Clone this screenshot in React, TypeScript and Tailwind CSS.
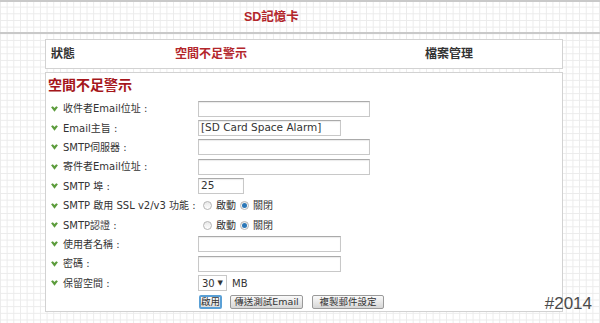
type Row = {
  label: string;
  kind: "input" | "radio" | "select";
  width?: string;
  value?: string;
};

const rows: Row[] = [
  { label: "收件者Email位址 :", kind: "input", width: "w-[172px]" },
  { label: "Email主旨 :", kind: "input", width: "w-[143px]", value: "[SD Card Space Alarm]" },
  { label: "SMTP伺服器 :", kind: "input", width: "w-[172px]" },
  { label: "寄件者Email位址 :", kind: "input", width: "w-[172px]" },
  { label: "SMTP 埠 :", kind: "input", width: "w-[46px]", value: "25" },
  { label: "SMTP 啟用 SSL v2/v3 功能 :", kind: "radio" },
  { label: "SMTP認證 :", kind: "radio" },
  { label: "使用者名稱 :", kind: "input", width: "w-[143px]" },
  { label: "密碼 :", kind: "input", width: "w-[143px]" },
  { label: "保留空間 :", kind: "select" },
];

function Bullet() {
  return (
    <svg width="7" height="6" viewBox="0 0 8 7" className="shrink-0">
      <path d="M0 1.6 L2 0.4 L4 2.4 L6 0.4 L8 1.6 L4 6.6 Z" fill="#5c9c3c" />
    </svg>
  );
}

function Radio({ on }: { on?: boolean }) {
  return (
    <span className="flex h-[9px] w-[9px] items-center justify-center rounded-full border border-[#b5b5b5] bg-[linear-gradient(#e8e8e8,#ffffff)]">
      {on && <span className="h-[5px] w-[5px] rounded-full bg-[#2c78b8]" />}
    </span>
  );
}

function Button({ children, className }: { children: string; className: string }) {
  return (
    <button
      className={`${className} flex h-[14px] items-center justify-center rounded-[2px] text-[9.5px] leading-none text-[#333]`}
    >
      {children}
    </button>
  );
}

export default function App() {
  return (
    <div className="relative h-[323px] w-[600px] overflow-hidden bg-white bg-[linear-gradient(to_right,#ebebeb_1px,transparent_1px),linear-gradient(to_bottom,#ebebeb_1px,transparent_1px)] bg-[length:6.67px_6.67px] font-['DejaVu_Sans','Noto_Sans_CJK_TC',sans-serif] text-[#333]">
      <div className="flex h-[34px] items-center border-t-2 border-b-2 border-[#c9c9c9] pl-[244px]">
        <span className="font-['Liberation_Sans','Noto_Sans_CJK_TC',sans-serif] text-[12.5px] font-bold text-[#b3262b]">SD記憶卡</span>
      </div>

      <div className="ml-[45px] mt-[5px] w-[518px]">
        <div className="flex h-[30px] items-center border border-[#d2d2d2] bg-white text-[12px] font-bold">
          <span className="ml-[5px] w-[124px]">狀態</span>
          <span className="w-[250px] text-[#b3262b]">空間不足警示</span>
          <span>檔案管理</span>
        </div>

        <div className="mt-[3px] h-[240px] border border-[#d2d2d2] bg-white">
          <div className="h-[26px] pl-[2px] text-[14px] font-bold leading-[24px] text-[#a5161b]">空間不足警示</div>
          {rows.map((r) => (
            <div key={r.label} className="flex h-[19.4px] items-center">
              <div className="flex w-[152px] shrink-0 items-center gap-[5px] pl-[5px] text-[10px]">
                <Bullet />
                <span className="whitespace-nowrap">{r.label}</span>
              </div>
              {r.kind === "input" && (
                <div
                  className={`${r.width} flex h-[16px] items-center border border-[#c8c8c8] border-t-[#aaaaaa] bg-white pl-[2px] text-[10.5px] shadow-[inset_0_1px_1px_rgba(0,0,0,0.08)]`}
                >
                  {r.value}
                </div>
              )}
              {r.kind === "radio" && (
                <div className="flex items-center pl-[5px] text-[10px]">
                  <Radio />
                  <span className="ml-[4px] mr-[4px]">啟動</span>
                  <Radio on />
                  <span className="ml-[4px]">關閉</span>
                </div>
              )}
              {r.kind === "select" && (
                <div className="flex items-center text-[10px]">
                  <div className="flex h-[16px] w-[29px] items-center justify-between border border-[#c8c8c8] bg-white px-[3px]">
                    <span>30</span>
                    <span className="text-[7px]">▼</span>
                  </div>
                  <span className="ml-[5px]">MB</span>
                </div>
              )}
            </div>
          ))}
          <div className="flex items-center pl-[153px] pt-[2px]">
            <Button className="w-[23px] border-2 border-[#5aa0d6] bg-[linear-gradient(#ffffff,#dcdcdc)]">啟用</Button>
            <Button className="ml-[8px] w-[73px] border border-[#9a9a9a] bg-[linear-gradient(#fafafa,#d6d6d6)]">
              傳送測試Email
            </Button>
            <Button className="ml-[9px] w-[72px] border border-[#9a9a9a] bg-[linear-gradient(#fafafa,#d6d6d6)]">
              複製郵件設定
            </Button>
          </div>
        </div>
      </div>

      <span className="absolute bottom-[7px] right-[8px] font-['Liberation_Sans',sans-serif] text-[17px] text-[#4a4a4a]">
        #2014
      </span>
    </div>
  );
}
